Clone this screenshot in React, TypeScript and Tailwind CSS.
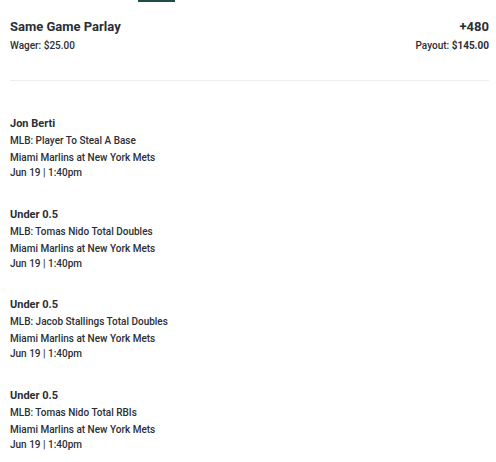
const legs = [
  { title: "Jon Berti", market: "MLB: Player To Steal A Base" },
  { title: "Under 0.5", market: "MLB: Tomas Nido Total Doubles" },
  { title: "Under 0.5", market: "MLB: Jacob Stallings Total Doubles" },
  { title: "Under 0.5", market: "MLB: Tomas Nido Total RBIs" },
];

const App = () => {
  return (
    <div className="h-[462px] w-[496px] overflow-hidden bg-white font-['Roboto',sans-serif] text-[#2b2e34]">
      <div className="ml-[138px] h-[2px] w-[37px] bg-[#1d4d4a]" />
      <div className="flex justify-between pl-[10px] pr-[7px] pt-[17px]">
        <div>
          <div className="text-[13px] leading-[16px] font-bold">Same Game Parlay</div>
          <div className="mt-[4px] text-[10px] leading-[13px] font-medium">Wager: $25.00</div>
        </div>
        <div className="text-right">
          <div className="text-[13px] leading-[16px] font-bold">+480</div>
          <div className="mt-[4px] text-[10px] leading-[13px] font-medium">
            Payout: <span className="font-bold">$145.00</span>
          </div>
        </div>
      </div>
      <div className="ml-[10px] mr-[7px] mt-[28px] border-t border-[#eeeeee]" />
      <div className="px-[10px] pt-[36px]">
        {legs.map((leg, i) => (
          <div key={i} className="h-[90.5px]">
            <div className="text-[11px] leading-[14px] font-bold">{leg.title}</div>
            <div className="mt-[3px] text-[10px] leading-[13px] font-medium">{leg.market}</div>
            <div className="mt-[4px] text-[10px] leading-[13px] font-medium">Miami Marlins at New York Mets</div>
            <div className="mt-[2px] text-[10px] leading-[13px] font-medium">Jun 19 | 1:40pm</div>
          </div>
        ))}
      </div>
    </div>
  );
};

export default App;
